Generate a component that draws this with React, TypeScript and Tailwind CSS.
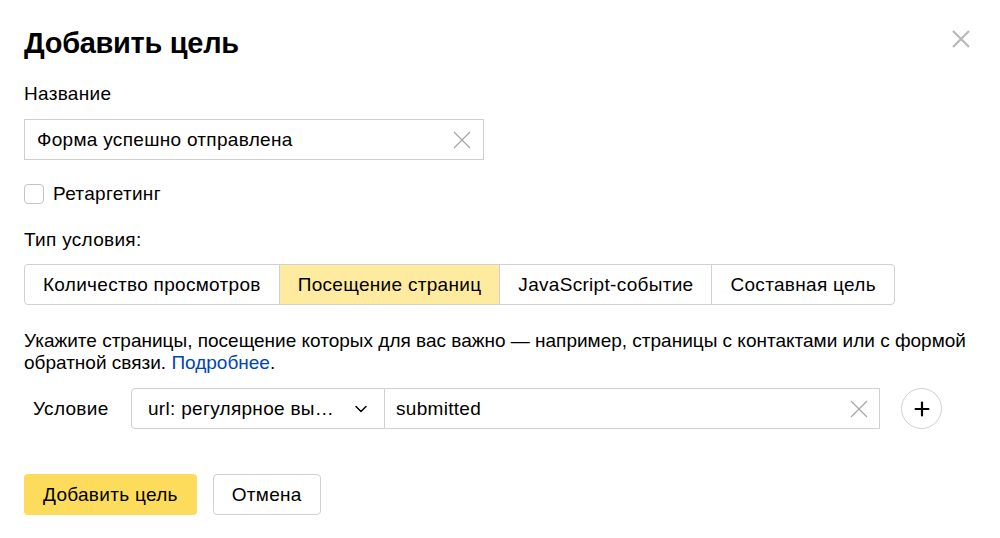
import { ChevronDown, Plus } from "lucide-react";

const tabs = ["Количество просмотров", "Посещение страниц", "JavaScript-событие", "Составная цель"];

const Clear = () => (
  <svg width="18" height="18" viewBox="0 0 18 18" className="text-[#a6a6a6]">
    <path d="M1 1L17 17M17 1L1 17" stroke="currentColor" strokeWidth="1.2" fill="none" />
  </svg>
);

const App = () => {
  return (
    <div className="min-h-screen bg-white text-black font-['Liberation_Sans',Arial,sans-serif] text-[19px] leading-[24px] tracking-[0.3px]">
      <div className="relative px-6 pt-[26px]">
        <button className="absolute right-[29px] top-[29px] text-[#b8b8b8]">
          <svg width="20" height="20" viewBox="0 0 20 20">
            <path d="M2 2L18 18M18 2L2 18" stroke="currentColor" strokeWidth="2.2" fill="none" />
          </svg>
        </button>

        <h1 className="text-[29px] leading-[34px] font-bold tracking-[-0.3px]">Добавить цель</h1>

        <div className="mt-[22px]">Название</div>
        <div className="mt-[13px] flex h-[41px] w-[460px] items-center border border-[#cfcfcf] pl-3 pr-3">
          <span className="flex-1">Форма успешно отправлена</span>
          <Clear />
        </div>

        <label className="mt-[22px] flex items-center gap-[9px]">
          <span className="h-5 w-5 rounded-[4px] border border-[#c4c4c4]" />
          <span>Ретаргетинг</span>
        </label>

        <div className="mt-[22px]">Тип условия:</div>
        <div className="mt-[12px] flex h-[41px] w-fit rounded-[4px] border border-[#d0d0d0]">
          {tabs.map((t, i) => (
            <div
              key={t}
              className={
                "flex items-center px-[18px] " +
                (i > 0 ? "border-l border-[#d0d0d0] " : "") +
                (i === 1 ? "bg-[#ffeba0]" : "")
              }
            >
              {t}
            </div>
          ))}
        </div>

        <p className="-mr-4 mt-[25px] leading-[22px] tracking-normal">
          Укажите страницы, посещение которых для вас важно — например, страницы с контактами или с формой
          обратной связи. <span className="text-[#04b]">Подробнее</span>.
        </p>

        <div className="mt-[14px] flex items-center">
          <div className="w-[107px] pl-[9px]">Условие</div>
          <div className="flex h-[41px] w-[254px] items-center justify-between rounded-l-[4px] border border-[#d0d0d0] pl-[16px] pr-[13px]">
            <span>url: регулярное вы…</span>
            <ChevronDown size={20} strokeWidth={1.8} />
          </div>
          <div className="flex h-[41px] w-[495px] items-center border border-l-0 border-[#d0d0d0] pl-[11px] pr-[11px]">
            <span className="flex-1">submitted</span>
            <Clear />
          </div>
          <button className="ml-[21px] flex h-[41px] w-[41px] items-center justify-center rounded-full border border-[#d0d0d0]">
            <Plus size={22} strokeWidth={2.4} />
          </button>
        </div>

        <div className="mt-[45px] flex gap-4">
          <button className="h-[41px] rounded-[4px] bg-[#fddc5c] px-[19px]">Добавить цель</button>
          <button className="h-[41px] rounded-[4px] border border-[#d0d0d0] px-[18px]">Отмена</button>
        </div>
      </div>
    </div>
  );
};

export default App;
